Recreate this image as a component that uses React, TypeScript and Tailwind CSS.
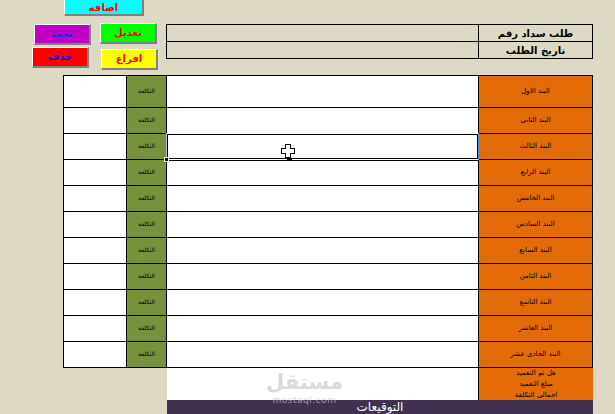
const font = { fontFamily: '"DejaVu Sans", sans-serif' };

const items = [
  'البند الاول',
  'البند الثانى',
  'البند الثالث',
  'البند الرابع',
  'البند الخامس',
  'البند السادس',
  'البند السابع',
  'البند الثامن',
  'البند التاسع',
  'البند العاشر',
  'البند الحادى عشر',
];

// floating excel shapes sitting over the sheet
const FloatButton = ({ label, className }: { label: string; className: string }) => (
  <button
    className={`absolute flex items-center justify-center border-t border-l border-white border-r-2 border-b-2 border-r-[#808080] border-b-[#808080] text-[10px] leading-[14px] font-bold ${className}`}
  >
    {label}
  </button>
);

const CrossCursor = () => (
  <svg className="absolute z-20 left-[113px] top-[9px]" width="16" height="17" viewBox="0 0 16 17" shapeRendering="crispEdges">
    <rect x="7" y="15" width="5" height="2" fill="#000" />
    <path d="M5.5 1.5h5v4h4v5h-4v4h-5v-4h-4v-5h4z" fill="#fff" stroke="#000" strokeWidth="1.5" />
  </svg>
);

const Selection = () => (
  <div className="absolute z-10 -left-px -top-px -bottom-px -right-px border-t border-b border-white border-l border-l-[#b4bfe0] border-r border-r-[#3d8fe0]">
    <div className="h-full border border-black" />
    <div className="absolute left-0 right-0 -bottom-[2px] h-px bg-black" />
    <div className="absolute -left-[3px] -bottom-[3px] w-[5px] h-[5px] border border-white bg-black" />
  </div>
);

const Row = ({ label, index }: { label: string; index: number }) => {
  const selected = index === 2;
  return (
    <div className={`flex border-b border-black ${index === 0 ? 'h-[32px]' : 'h-[26px]'}`}>
      <div className="w-[62px] shrink-0 bg-white" />
      <div className="w-[40px] shrink-0 border-l border-black bg-[#76933C] flex items-center justify-center pb-[2px] text-[6px] text-black">
        التكلفة
      </div>
      <div className="w-[312px] shrink-0 border-l border-black bg-white relative">
        {selected && <Selection />}
        {selected && <CrossCursor />}
      </div>
      <div className="flex-1 border-l border-black bg-[#E36C09] flex items-center justify-center text-[7px] text-black">
        {label}
      </div>
    </div>
  );
};

export default function App() {
  return (
    <div dir="ltr" style={font} className="relative w-[615px] h-[414px] overflow-hidden bg-[#DDD9C4] pt-[24px]">
      <FloatButton label="اضافه" className="left-[64px] -top-[2px] w-[80px] h-[18px] pt-[2px] bg-[#00FFFF] text-[#FF0000]" />
      <FloatButton label="بحث" className="left-[34px] top-[24px] w-[57px] h-[21px] bg-[#BF00BF] text-[#2020FF]" />
      <FloatButton label="تعديل" className="left-[100px] top-[23px] w-[57px] h-[21px] bg-[#00FF00] text-[#FF0000]" />
      <FloatButton label="حذف" className="left-[32px] top-[47px] w-[57px] h-[21px] bg-[#FF0000] text-[#0000FF]" />
      <FloatButton label="افراغ" className="left-[101px] top-[49px] w-[57px] h-[21px] bg-[#FFFF00] text-[#FF0000]" />

      <div className="ml-[166px] w-[427px] border border-black text-[10px] font-bold text-black">
        <div className="flex h-[17px] border-b border-black">
          <div className="w-[311px]" />
          <div className="flex-1 border-l border-black flex items-center justify-center">طلب سداد رقم</div>
        </div>
        <div className="flex h-[16px]">
          <div className="w-[311px]" />
          <div className="flex-1 border-l border-black flex items-center justify-center">تاريخ الطلب</div>
        </div>
      </div>

      <div className="mt-[16px] ml-[63px] w-[530px] border-t border-l border-r border-black">
        {items.map((label, i) => (
          <Row key={label} label={label} index={i} />
        ))}
      </div>

      <div className="ml-[167px] w-[426px] flex h-[32px]">
        <div className="w-[311px] bg-white" />
        <div className="flex-1 border-l border-black bg-[#E36C09] flex flex-col items-center justify-center text-[7px] leading-[11px] text-black">
          <span>هل تم التعميد</span>
          <span>مبلغ التعميد</span>
          <span>اجمالى التكلفة</span>
        </div>
      </div>
      <div className="ml-[167px] w-[426px] h-[14px] pt-[1px] bg-[#403151] flex items-center justify-center text-white text-[12px] leading-[13px]">
        التوقيعات
      </div>

      <div className="absolute left-[267px] top-[369px] w-[75px] flex flex-col items-center text-[#c9c9c9] opacity-70 pointer-events-none">
        <span className="text-[21px] leading-[26px] font-bold">مستقل</span>
        <span className="text-[9px] leading-[10px] tracking-[0.5px]">mostaql.com</span>
      </div>
    </div>
  );
}
